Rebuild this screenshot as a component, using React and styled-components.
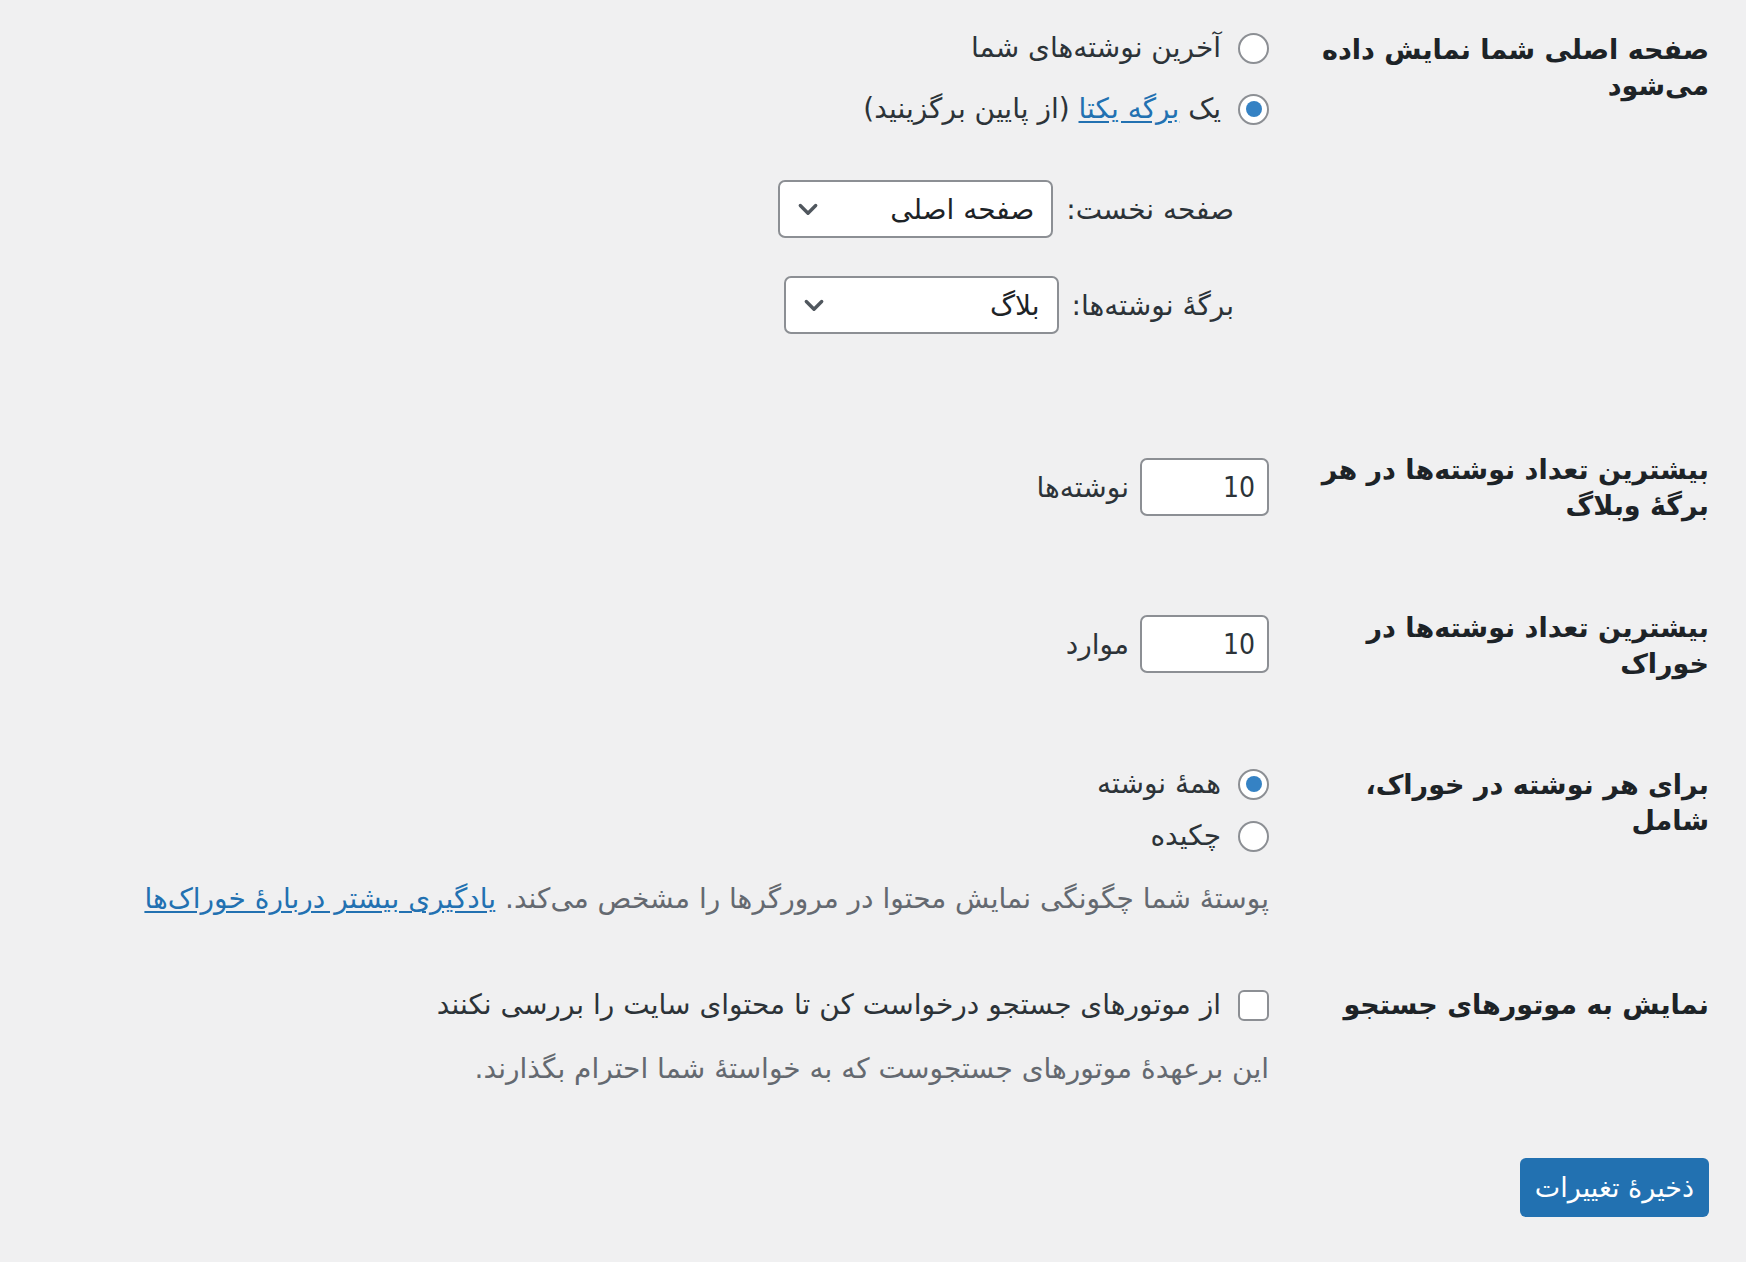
import React from 'react';
import styled, { createGlobalStyle } from 'styled-components';

const GlobalStyle = createGlobalStyle`
  html, body {
    margin: 0;
    padding: 0;
    background: #f0f0f1;
  }
  * {
    box-sizing: border-box;
  }
`;

const ZW = '\u200c';

const Page = styled.div`
  direction: rtl;
  min-height: 100vh;
  padding: 28px 37px 40px 0;
  font-family: "DejaVu Sans", sans-serif;
  font-size: 28px;
  color: #3c434a;
`;

const Row = styled.div`
  display: grid;
  grid-template-columns: 420px 1fr;
  align-items: start;
  margin-top: ${(p) => p.$top || 0}px;
`;

const Th = styled.div`
  padding-left: 20px;
  padding-top: ${(p) => p.$pad || 0}px;
  font-weight: 700;
  font-size: 27px;
  line-height: 36px;
  color: #1d2327;
`;

const Td = styled.div`
  padding-right: 20px;
  padding-top: ${(p) => p.$pad || 0}px;
`;

const OptionList = styled.div`
  display: flex;
  flex-direction: column;
  gap: ${(p) => p.$gap || 21}px;
`;

const Option = styled.label`
  display: flex;
  align-items: center;
  gap: 17px;
  line-height: 40px;
  color: #2c3338;
`;

const Radio = styled.input.attrs({ type: 'radio' })`
  appearance: none;
  margin: 0;
  flex: none;
  width: 31px;
  height: 31px;
  border: 2px solid #8c8f94;
  border-radius: 50%;
  background: #fff;
  display: inline-flex;
  align-items: center;
  justify-content: center;

  &:checked::before {
    content: '';
    width: 16px;
    height: 16px;
    border-radius: 50%;
    background: #3582c4;
  }
`;

const Checkbox = styled.input.attrs({ type: 'checkbox' })`
  appearance: none;
  margin: 0;
  flex: none;
  width: 31px;
  height: 31px;
  border: 2px solid #8c8f94;
  border-radius: 6px;
  background: #fff;
`;

const Link = styled.a`
  color: #2271b1;
  text-decoration: underline;
  text-underline-offset: 3px;
`;

const PageSelects = styled.div`
  margin-top: 51px;
  padding-right: 35px;
  display: flex;
  flex-direction: column;
  gap: 38px;
`;

const FieldRow = styled.div`
  display: flex;
  align-items: center;
  gap: ${(p) => p.$gap || 13}px;
  color: #2c3338;
`;

const Select = styled.div`
  width: 275px;
  height: 58px;
  display: flex;
  align-items: center;
  justify-content: space-between;
  padding: 0 17px 0 14px;
  background: #fff;
  border: 2px solid #8c8f94;
  border-radius: 7px;
  color: #1d2327;
`;

const NumberInput = styled.input`
  width: 129px;
  height: 58px;
  margin: 0;
  padding: 0 12px;
  direction: ltr;
  text-align: right;
  font-family: "DejaVu Sans Condensed", "DejaVu Sans", sans-serif;
  font-size: 28px;
  color: #2c3338;
  background: #fff;
  border: 2px solid #8c8f94;
  border-radius: 7px;
  outline: none;
`;

const Description = styled.p`
  margin: ${(p) => p.$top || 23}px 0 0;
  line-height: 40px;
  color: #646970;
`;

const Footer = styled.div`
  display: flex;
  margin-top: 69px;
`;

const SaveButton = styled.button`
  height: 59px;
  padding: 0 15px;
  border: 0;
  border-radius: 6px;
  background: #2271b1;
  color: #fff;
  font-family: "DejaVu Sans", sans-serif;
  font-size: 27px;
`;

const Chevron = () => (
  <svg width="28" height="28" viewBox="0 0 20 20" fill="none">
    <path d="M4.5 7.5l5.5 5.5 5.5-5.5" stroke="#50575e" strokeWidth="2.4" strokeLinecap="round" strokeLinejoin="round" />
  </svg>
);

export default function App() {
  return (
    <>
      <GlobalStyle />
      <Page>
        <Row>
          <Th $pad={4}>صفحه اصلی شما نمایش داده {`می${ZW}شود`}</Th>
          <Td>
            <OptionList>
              <Option>
                <Radio name="show_on_front" />
                {`آخرین نوشته${ZW}های شما`}
              </Option>
              <Option>
                <Radio name="show_on_front" defaultChecked />
                <span>
                  یک <Link href="#">برگه یکتا</Link> (از پایین برگزینید)
                </span>
              </Option>
            </OptionList>
            <PageSelects>
              <FieldRow>
                <span>صفحه نخست:</span>
                <Select>
                  <span>صفحه اصلی</span>
                  <Chevron />
                </Select>
              </FieldRow>
              <FieldRow>
                <span>{`برگهٔ نوشته${ZW}ها:`}</span>
                <Select>
                  <span>بلاگ</span>
                  <Chevron />
                </Select>
              </FieldRow>
            </PageSelects>
          </Td>
        </Row>

        <Row $top={118}>
          <Th>{`بیشترین تعداد نوشته${ZW}ها در هر برگهٔ وبلاگ`}</Th>
          <Td $pad={6}>
            <FieldRow $gap={11}>
              <NumberInput defaultValue="10" />
              <span>{`نوشته${ZW}ها`}</span>
            </FieldRow>
          </Td>
        </Row>

        <Row $top={86}>
          <Th>{`بیشترین تعداد نوشته${ZW}ها در خوراک`}</Th>
          <Td $pad={5}>
            <FieldRow $gap={11}>
              <NumberInput defaultValue="10" />
              <span>موارد</span>
            </FieldRow>
          </Td>
        </Row>

        <Row $top={82}>
          <Th $pad={3}>برای هر نوشته در خوراک، شامل</Th>
          <Td>
            <OptionList $gap={12}>
              <Option>
                <Radio name="rss_use_excerpt" defaultChecked />
                همهٔ نوشته
              </Option>
              <Option>
                <Radio name="rss_use_excerpt" />
                چکیده
              </Option>
            </OptionList>
            <Description>
              {`پوستهٔ شما چگونگی نمایش محتوا در مرورگرها را مشخص می${ZW}کند. `}
              <Link href="#">{`یادگیری بیشتر دربارهٔ خوراک${ZW}ها`}</Link>
            </Description>
          </Td>
        </Row>

        <Row $top={66}>
          <Th $pad={2}>{`نمایش به موتورهای جستجو`}</Th>
          <Td>
            <Option>
              <Checkbox />
              از موتورهای جستجو درخواست کن تا محتوای سایت را بررسی نکنند
            </Option>
            <Description $top={24}>
              این برعهدهٔ موتورهای جستجوست که به خواستهٔ شما احترام بگذارند.
            </Description>
          </Td>
        </Row>

        <Footer>
          <SaveButton>ذخیرهٔ تغییرات</SaveButton>
        </Footer>
      </Page>
    </>
  );
}
